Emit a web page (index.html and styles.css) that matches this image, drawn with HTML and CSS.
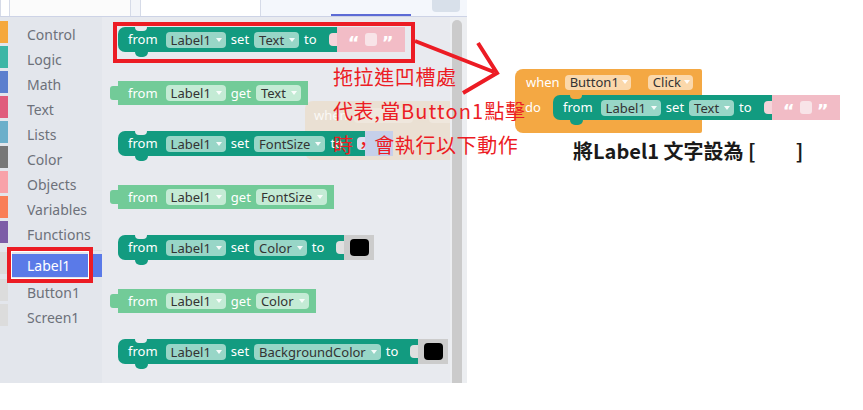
FILE: index.html
```html
<!DOCTYPE html>
<html lang="zh-Hant">
<head>
<meta charset="utf-8">
<title>Blocks</title>
<link rel="stylesheet" href="styles.css">
</head>
<body>
<div class="page">
  <div class="designer">
    <div class="tabs">
      <div class="tab tab-a"></div>
      <div class="tab tab-b"></div>
      <div class="tab tab-gap"></div>
      <div class="tab tab-c"></div>
      <div class="tab tab-d">
        <div class="tab-line"></div>
        <div class="tab-btn"></div>
      </div>
    </div>
    <div class="main">
      <nav class="palette">
        <div class="cat"><span class="sw c-control"></span><span class="cat-label">Control</span></div>
        <div class="cat"><span class="sw c-logic"></span><span class="cat-label">Logic</span></div>
        <div class="cat"><span class="sw c-math"></span><span class="cat-label">Math</span></div>
        <div class="cat"><span class="sw c-text"></span><span class="cat-label">Text</span></div>
        <div class="cat"><span class="sw c-lists"></span><span class="cat-label">Lists</span></div>
        <div class="cat"><span class="sw c-color"></span><span class="cat-label">Color</span></div>
        <div class="cat"><span class="sw c-objects"></span><span class="cat-label">Objects</span></div>
        <div class="cat"><span class="sw c-vars"></span><span class="cat-label">Variables</span></div>
        <div class="cat"><span class="sw c-func"></span><span class="cat-label">Functions</span></div>
        <div class="sep"></div>
        <div class="cat sel"><span class="sw c-comp"></span><span class="cat-label">Label1</span></div>
        <div class="cat"><span class="sw c-comp"></span><span class="cat-label">Button1</span></div>
        <div class="cat"><span class="sw c-comp"></span><span class="cat-label">Screen1</span></div>
      </nav>
      <div class="ws">
        <div class="blk set">
          <span class="kw from">from</span><span class="dd">Label1</span><span class="kw">set</span><span class="dd">Text</span><span class="kw">to</span>
          <span class="val val-text"><span class="q">“</span><span class="qbox"></span><span class="q">”</span></span>
        </div>
        <div class="blk get">
          <span class="kw from">from</span><span class="dd">Label1</span><span class="kw">get</span><span class="dd">Text</span>
        </div>
        <div class="blk set">
          <span class="kw from">from</span><span class="dd">Label1</span><span class="kw">set</span><span class="dd">FontSize</span><span class="kw">to</span>
          <span class="val val-blue"></span>
        </div>
        <div class="blk get">
          <span class="kw from">from</span><span class="dd">Label1</span><span class="kw">get</span><span class="dd">FontSize</span>
        </div>
        <div class="blk set">
          <span class="kw from">from</span><span class="dd">Label1</span><span class="kw">set</span><span class="dd">Color</span><span class="kw">to</span>
          <span class="val val-color"><span class="black"></span></span>
        </div>
        <div class="blk get">
          <span class="kw from">from</span><span class="dd">Label1</span><span class="kw">get</span><span class="dd">Color</span>
        </div>
        <div class="blk set">
          <span class="kw from">from</span><span class="dd">Label1</span><span class="kw">set</span><span class="dd">BackgroundColor</span><span class="kw">to</span>
          <span class="val val-color"><span class="black"></span></span>
        </div>
        <div class="ghost">
          <span class="ghost-when">when</span>
          <span class="ghost-pill gp1"></span>
          <span class="ghost-pill gp2"></span>
        </div>
      </div>
      <div class="scroll"><div class="thumb"></div></div>
    </div>
  </div>

  <div class="preview">
    <div class="event">
      <div class="ev-row1">
        <span class="kw">when</span><span class="dd dd-o">Button1</span><span class="dd dd-o dd-click">Click</span>
      </div>
      <div class="ev-row2">
        <span class="do">do</span>
        <div class="blk set inner">
          <span class="kw from">from</span><span class="dd">Label1</span><span class="kw">set</span><span class="dd">Text</span><span class="kw">to</span>
          <span class="val val-text"><span class="q">“</span><span class="qbox"></span><span class="q">”</span></span>
        </div>
      </div>
      <div class="ev-row3"></div>
    </div>
    <p class="caption">將Label1 文字設為 [<span class="blank"></span>]</p>
  </div>

  <div class="mark mark-blk"></div>
  <div class="mark mark-cat"></div>
  <svg class="arrow" width="863" height="410" viewBox="0 0 863 410">
    <path d="M415 41 L494 72 M478 43 L497 73 L463 93" fill="none" stroke="#ec1c24" stroke-width="4" stroke-linecap="butt" stroke-linejoin="miter"/>
  </svg>
  <div class="note">拖拉進凹槽處<br>代表,當<span class="latin">Button1</span>點擊<br>時，會執行以下動作</div>
</div>
</body>
</html>
```
FILE: styles.css
```css
* { box-sizing: border-box; }
html, body { margin: 0; padding: 0; }
body {
  width: 863px;
  height: 410px;
  overflow: hidden;
  background: #fff;
  font-family: "Noto Sans", "Liberation Sans", sans-serif;
}
.page { position: relative; display: flex; width: 863px; height: 410px; }

/* ---------- designer column ---------- */
.designer { width: 467px; height: 383px; display: flex; flex-direction: column; }
.tabs { height: 17px; display: flex; border-bottom: 1px solid #cdd3e6; background: #f4f7fc; }
.tab { height: 16px; }
.tab-a { width: 10px; background: #fff; border-left: 1px solid #d6dbe8; border-right: 1px solid #d6dbe8; }
.tab-b { width: 121px; background: #fbfbfb; border-right: 1px solid #d6dbe8; }
.tab-gap { width: 9px; background: #f3f5f9; }
.tab-c { width: 121px; background: #fff; border-left: 1px solid #d6dbe8; border-right: 1px solid #d6dbe8; }
.tab-d { flex: 1; display: flex; align-items: flex-start; }
.tab-line { align-self: flex-end; margin-left: 70px; width: 80px; height: 2px; background: #5c6bd5; }
.tab-btn { margin-left: 21px; width: 28px; height: 12px; background: #d8e0ea; border-radius: 0 0 4px 4px; }

.main { flex: 1; display: flex; }

/* palette */
.palette { width: 102px; background: #e3e6ec; padding-top: 6px; display: flex; flex-direction: column; gap: 2px; }
.cat { display: flex; height: 23px; }
.sw { width: 8px; height: 22px; flex: none; margin-top: -2px; }
.cat-label { margin-left: 4px; flex: 1; padding-left: 15px; line-height: 23px; font-size: 14px; color: #6d717a; }
.cat.sel { margin-bottom: 2px; }
.cat.sel .cat-label { background: #5a7ae8; color: #fff; }
.sep { height: 1px; background: #d9dce3; margin: 2px 0 1px 8px; }
.c-control { background: #f5a83d; }
.c-logic { background: #3db6a6; }
.c-math { background: #5c7fce; }
.c-text { background: #e05c7c; }
.c-lists { background: #6cafca; }
.c-color { background: #777777; }
.c-objects { background: #f8a2a9; }
.c-vars { background: #f97e57; }
.c-func { background: #7d5da7; }
.c-comp { background: #dcdcdc; }

/* workspace */
.ws {
  flex: 1;
  position: relative;
  background: #e8eaef;
  padding: 10px 0 0 16px;
  display: flex;
  flex-direction: column;
  align-items: flex-start;
  overflow: hidden;
}
.scroll { width: 17px; background: #eceef1; padding: 3px 0 0 2px; position: relative; z-index: 2; }
.thumb { width: 10px; height: 100%; background: #cbcbcb; border-radius: 5px 5px 0 0; }

/* ---------- blocks ---------- */
.blk {
  position: relative;
  z-index: 1;
  flex: none;
  display: flex;
  align-items: center;
  gap: 5px;
  height: 25px;
  padding-left: 10px;
  color: #fff;
  font-size: 13px;
  white-space: nowrap;
  border-radius: 7px 0 0 7px;
}
.kw { line-height: 1; }
.from { margin-right: 3px; }
.set { background: #129b80; margin-top: 26px; --pill: #98d6c7; --under: #e8eaef; }
.set:first-child { margin-top: 0; }
.set::before {
  content: "";
  position: absolute;
  left: 17px;
  top: 0;
  width: 12px;
  height: 4px;
  background: var(--under);
  border-radius: 0 0 5px 5px;
}
.set::after {
  content: "";
  position: absolute;
  left: 17px;
  top: 100%;
  width: 13px;
  height: 5px;
  background: #129b80;
  border-radius: 0 0 5px 5px;
}
.get { background: #72cb98; height: 24px; margin-top: 29px; padding-right: 7px; border-radius: 0; --pill: #c4ebd5; }
.get::before {
  content: "";
  position: absolute;
  left: -8px;
  top: 5px;
  width: 8px;
  height: 14px;
  background: #72cb98;
  border-radius: 3px 0 0 3px;
}

.dd {
  display: flex;
  align-items: center;
  gap: 5px;
  height: 16px;
  padding: 0 4px 0 5px;
  border-radius: 4px;
  background: var(--pill);
  color: #333;
}
.dd::after {
  content: "";
  border-left: 3.5px solid transparent;
  border-right: 3.5px solid transparent;
  border-top: 4px solid rgba(255, 255, 255, 0.9);
}

.val {
  position: relative;
  height: 25px;
  display: flex;
  align-items: center;
  justify-content: center;
  margin-left: 15px;
}
.val::before {
  content: "";
  position: absolute;
  left: -8px;
  top: 6px;
  width: 8px;
  height: 13px;
  border-radius: 4px 0 0 4px;
  background: var(--tab);
}
.val-text { width: 68px; background: #f2bcc6; --tab: #f6d4da; gap: 5px; }
.q { font-size: 18px; font-weight: 700; color: #fff; line-height: 1; margin-top: 6px; font-family: "DejaVu Sans", sans-serif; }
.qbox { width: 12px; height: 13px; background: #f8e4e8; border-radius: 3px; }
.val-color { width: 30px; background: #cccccc; --tab: #e0e0e0; }
.black { width: 19px; height: 17px; background: #000; border-radius: 4px; }
.val-blue { width: 28px; margin-left: 17px; background: #c6d0ea; --tab: #dbe1f2; }

/* drag ghost */
.ghost {
  position: absolute;
  left: 203px;
  top: 84px;
  width: 170px;
  height: 59px;
  background: #eae0d3;
  border-radius: 8px 0 0 8px;
  z-index: 0;
  display: flex;
  align-items: flex-start;
  gap: 6px;
  padding: 7px 0 0 9px;
}
.ghost-when { color: rgba(255, 255, 255, 0.8); font-size: 13px; line-height: 14px; }
.ghost-pill { height: 15px; background: #efe7dd; border-radius: 4px; }
.gp1 { width: 64px; }
.gp2 { width: 50px; margin-left: 10px; }

/* ---------- preview ---------- */
.preview { flex: 1; padding: 69px 0 0 48px; }
.event {
  width: 187px;
  background: #f4a843;
  border-radius: 8px 2px 2px 8px;
  color: #fff;
  font-size: 13px;
}
.ev-row1 { height: 26px; display: flex; align-items: center; gap: 5px; padding-left: 11px; --pill: #fbd8ab; }
.dd-o { height: 15px; padding: 0 3px 0 5px; gap: 3px; }
.dd-click { margin-left: 12px; }
.ev-row2 { display: flex; height: 25px; }
.do { width: 38px; flex: none; padding-left: 10px; line-height: 25px; }
.inner { margin-top: 0; --under: #f4a843; }
.ev-row3 { height: 13px; }
.caption {
  margin: 5px 0 0 58px;
  font-family: "Noto Sans CJK TC", "Noto Sans", sans-serif;
  font-weight: 700;
  font-size: 20px;
  line-height: 26px;
  color: #1a1a1a;
  white-space: nowrap;
}
.blank { display: inline-block; width: 40px; }

/* ---------- annotations ---------- */
.mark { position: absolute; border: 4px solid #ec1c24; z-index: 5; }
.mark-blk { left: 113px; top: 22px; width: 302px; height: 41px; }
.mark-cat { left: 7px; top: 247px; width: 86px; height: 36px; box-shadow: inset 0 0 0 1px #fff; }
.arrow { position: absolute; left: 0; top: 0; z-index: 5; pointer-events: none; }
.note {
  position: absolute;
  left: 333px;
  top: 60px;
  z-index: 6;
  font-family: "Noto Sans CJK TC", sans-serif;
  font-size: 20px;
  line-height: 34px;
  letter-spacing: 0.6px;
  color: #ec1c24;
  white-space: nowrap;
}
.latin { letter-spacing: 1.2px; }
```
